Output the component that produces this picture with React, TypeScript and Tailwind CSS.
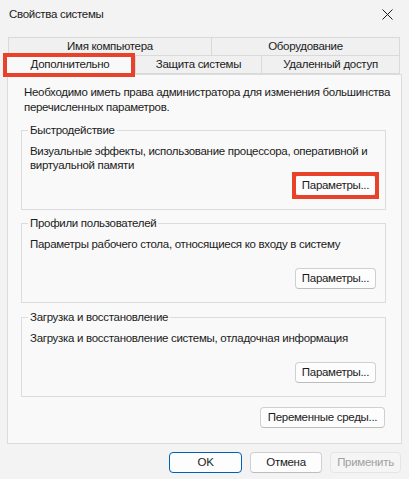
import React from "react";

const font = { fontFamily: '"Liberation Sans", Arial, sans-serif' };

function Btn({ label, width, highlight }: { label: string; width: string; highlight?: boolean }) {
  return (
    <div className="relative">
      <button
        className={`${width} h-[21px] rounded-[4px] border border-[#d0d0d0] border-b-[#bdbdbd] bg-[#fdfdfd] text-[#1b1b1b] leading-none`}
      >
        {label}
      </button>
      {highlight && (
        <span className="absolute -left-[3px] -top-[3px] -right-[3px] -bottom-[3px] border-[4px] border-[#e8432a] pointer-events-none" />
      )}
    </div>
  );
}

function Group({
  title,
  text,
  highlight,
  className,
}: {
  title: string;
  text: string;
  highlight?: boolean;
  className?: string;
}) {
  return (
    <fieldset className={`mr-[9px] border border-[#dcdcdc] pl-[6px] pr-[9px] pb-[13px] ${className ?? ""}`}>
      <legend className="px-[2px] leading-[15px] text-[#1b1b1b]">{title}</legend>
      <p className="pl-[2px] pt-[6px] h-[37px] leading-[14px] text-[#1b1b1b]">{text}</p>
      <div className="flex justify-end">
        <Btn label="Параметры..." width="w-[81px]" highlight={highlight} />
      </div>
    </fieldset>
  );
}

export default function App() {
  return (
    <div
      className="w-[409px] h-[479px] bg-[#f3f3f3] flex flex-col overflow-hidden text-[11.5px] tracking-[-0.3px] text-[#1b1b1b]"
      style={font}
    >
      {/* Title bar */}
      <div className="h-[29px] flex items-center justify-between pl-[9px] pr-[16px]">
        <span>Свойства системы</span>
        <svg width="11" height="11" viewBox="0 0 11 11">
          <path d="M0.5 0.5 L10.5 10.5 M10.5 0.5 L0.5 10.5" stroke="#1b1b1b" strokeWidth="1" />
        </svg>
      </div>

      {/* Tabs */}
      <div className="pt-[8px]">
        <div className="ml-[8px] w-[392px] h-[19px] flex">
          <div className="w-[204px] flex items-center justify-center border border-[#d9d9d9] bg-[#f0f0f0]">
            Имя компьютера
          </div>
          <div className="flex-1 flex items-center justify-center border border-l-0 border-[#d9d9d9] bg-[#f0f0f0]">
            Оборудование
          </div>
        </div>
        <div className="h-[18px] flex items-start">
          <div className="relative z-10 ml-[5px] -mt-[2px] w-[130px] h-[21px] flex items-center justify-center border border-b-0 border-[#d9d9d9] bg-[#f9f9f9]">
            Дополнительно
            <span className="absolute -left-[3px] -top-[2px] w-[132px] h-[24px] border-[4px] border-[#e8432a]" />
          </div>
          <div className="w-[127px] h-[18px] flex items-center justify-center border border-t-0 border-[#d9d9d9] bg-[#f0f0f0]">
            Защита системы
          </div>
          <div className="w-[138px] h-[18px] flex items-center justify-center border border-t-0 border-l-0 border-[#d9d9d9] bg-[#f0f0f0]">
            Удаленный доступ
          </div>
        </div>
      </div>

      {/* Panel */}
      <div className="mx-[7px] h-[370px] border border-[#dcdcdc] bg-[#f9f9f9] pl-[13px] pr-[6px] pt-[10px] flex flex-col">
        <p className="pl-[3px] leading-[15px]">
          Необходимо иметь права администратора для изменения большинства перечисленных параметров.
        </p>
        <Group
          className="mt-[8px]"
          title="Быстродействие"
          text="Визуальные эффекты, использование процессора, оперативной и виртуальной памяти"
          highlight
        />
        <Group
          className="mt-[6px]"
          title="Профили пользователей"
          text="Параметры рабочего стола, относящиеся ко входу в систему"
        />
        <Group
          className="mt-[7px]"
          title="Загрузка и восстановление"
          text="Загрузка и восстановление системы, отладочная информация"
        />
        <div className="flex justify-end mt-[10px] mr-[10px]">
          <Btn label="Переменные среды..." width="w-[125px]" />
        </div>
      </div>

      {/* Bottom buttons */}
      <div className="flex justify-end gap-[8px] pr-[8px] pt-[8px]">
        <button className="w-[73px] h-[21px] rounded-[4px] border border-[#005fb8] bg-[#fdfdfd] text-[#1b1b1b]">
          OK
        </button>
        <button className="w-[72px] h-[21px] rounded-[4px] border border-[#d0d0d0] border-b-[#bdbdbd] bg-[#fdfdfd] text-[#1b1b1b]">
          Отмена
        </button>
        <button className="w-[71px] h-[21px] rounded-[4px] border border-[#e5e5e5] bg-[#f5f5f5] text-[#a0a0a0]">
          Применить
        </button>
      </div>
    </div>
  );
}
